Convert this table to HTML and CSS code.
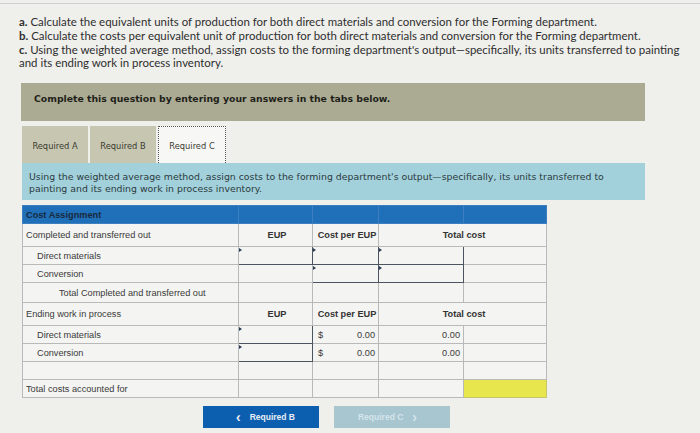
FILE: index.html
```html
<!DOCTYPE html>
<html>
<head>
<meta charset="utf-8">
<link rel="stylesheet" href="styles.css">
</head>
<body>
<div class="page">
  <div class="topline"></div>
  <div class="prompt">
    <div><b>a.</b> Calculate the equivalent units of production for both direct materials and conversion for the Forming department.</div>
    <div><b>b.</b> Calculate the costs per equivalent unit of production for both direct materials and conversion for the Forming department.</div>
    <div><b>c.</b> Using the weighted average method, assign costs to the forming department's output—specifically, its units transferred to painting<br>and its ending work in process inventory.</div>
  </div>
  <div class="banner">Complete this question by entering your answers in the tabs below.</div>
  <div class="tabs">
    <div class="tab">Required A</div>
    <div class="tab">Required B</div>
    <div class="tab active">Required C</div>
  </div>
  <div class="instr">Using the weighted average method, assign costs to the forming department's output—specifically, its units transferred to painting and its ending work in process inventory.</div>
  <table class="grid">
    <colgroup>
      <col class="c1"><col class="c2"><col class="c3"><col class="c4"><col class="c5">
    </colgroup>
    <tr class="head">
      <td>Cost Assignment</td><td></td><td></td><td></td><td></td>
    </tr>
    <tr class="sub">
      <td>Completed and transferred out</td><td class="ctr b">EUP</td><td class="ctr b">Cost per EUP</td><td class="ctr b" colspan="2">Total cost</td>
    </tr>
    <tr class="row">
      <td class="ind1">Direct materials</td><td class="inp"><span class="mark"></span></td><td class="inp"><span class="mark"></span></td><td class="inp"><span class="mark"></span></td><td></td>
    </tr>
    <tr class="row">
      <td class="ind1">Conversion</td><td></td><td class="inp"><span class="mark"></span></td><td class="inp"><span class="mark"></span></td><td></td>
    </tr>
    <tr class="row tall">
      <td class="ind2">Total Completed and transferred out</td><td></td><td></td><td></td><td></td>
    </tr>
    <tr class="sub">
      <td>Ending work in process</td><td class="ctr b">EUP</td><td class="ctr b">Cost per EUP</td><td class="ctr b" colspan="2">Total cost</td>
    </tr>
    <tr class="row">
      <td class="ind1">Direct materials</td><td class="inp"><span class="mark"></span></td><td><div class="money"><span>$</span><span>0.00</span></div></td><td class="num">0.00</td><td></td>
    </tr>
    <tr class="row">
      <td class="ind1">Conversion</td><td class="inp"><span class="mark"></span></td><td><div class="money"><span>$</span><span>0.00</span></div></td><td class="num">0.00</td><td></td>
    </tr>
    <tr class="row">
      <td></td><td></td><td></td><td></td><td></td>
    </tr>
    <tr class="row">
      <td>Total costs accounted for</td><td></td><td></td><td></td><td class="yellow"></td>
    </tr>
  </table>
  <div class="nav">
    <div class="btn prev"><span class="chev">&lsaquo;</span>Required B</div>
    <div class="btn next">Required C<span class="chev">&rsaquo;</span></div>
  </div>
</div>
</body>
</html>
```
FILE: styles.css
```css
html, body { margin: 0; padding: 0; }
body {
  background: #efefec;
  width: 700px;
  height: 433px;
  overflow: hidden;
  font-family: "Liberation Sans", Arial, sans-serif;
  color: #333;
}
.page { position: relative; }
.topline { height: 3px; border-bottom: 1px solid #cfcfcf; }
.prompt {
  padding: 11px 0 0 19px;
  width: 681px;
  font-family: "Lato", "Liberation Sans", sans-serif;
  font-size: 11.45px;
  line-height: 13.8px;
  color: #2e2e2e;
  white-space: nowrap;
}
.prompt b { font-weight: 700; }
.banner {
  margin: 13px 0 0 21px;
  width: 624px;
  height: 38px;
  box-sizing: border-box;
  padding: 10px 0 0 13px;
  background: #abab93;
  font-family: "DejaVu Sans", Verdana, sans-serif;
  font-weight: bold;
  font-size: 9.3px;
  color: #1f1f1a;
}
.tabs {
  display: flex;
  gap: 2px;
  margin: 5px 0 0 22px;
  height: 37px;
}
.tab {
  width: 66px;
  background: #c7c7b1;
  font-family: "DejaVu Sans", Verdana, sans-serif;
  font-size: 8.3px;
  color: #3a3a30;
  display: flex;
  align-items: center;
  justify-content: center;
  padding-top: 2px;
  box-sizing: border-box;
}
.tab.active {
  width: 68px;
  background: #f7f7f5;
  border: 1px dotted #555;
  border-bottom: none;
}
.instr {
  margin-left: 22px;
  width: 623px;
  height: 37px;
  box-sizing: border-box;
  padding: 8px 20px 0 7px;
  background: #a3d1db;
  font-family: "DejaVu Sans", Verdana, sans-serif;
  font-size: 9.35px;
  line-height: 12px;
  color: #2a3a3e;
}
.grid {
  margin: 5px 0 0 22px;
  border-collapse: collapse;
  table-layout: fixed;
  width: 524px;
  font-size: 9.2px;
  color: #3a3a3a;
}
.grid td {
  border: 1px solid #b9b9b9;
  padding: 0 0 0 3px;
  background: #f4f4f2;
  position: relative;
  white-space: nowrap;
  overflow: hidden;
}
.c1 { width: 216px; }
.c2 { width: 74px; }
.c3 { width: 66px; }
.c4 { width: 85px; }
.c5 { width: 83px; }
.grid .head td {
  background: #1f6fb9;
  height: 17px;
  border-color: #3d7fbf;
  font-weight: bold;
  color: #1a2a3e;
}
.grid .sub td { height: 22px; }
.grid .row td { height: 17px; }
.grid .row.tall td { height: 19px; }
.ctr { text-align: center; }
.b { font-weight: bold; color: #333; }
.ind1 { padding-left: 14px !important; }
.ind2 { padding-left: 36px !important; }
.grid td.inp { border: 1px solid #4a5560; }
.mark {
  position: absolute;
  left: 0;
  top: 1px;
  width: 0;
  height: 0;
  border-top: 2px solid transparent;
  border-bottom: 2px solid transparent;
  border-left: 3px solid #2b3d55;
}
.money {
  display: flex;
  justify-content: space-between;
  padding: 0 3px 0 2px;
}
.num { text-align: right; padding-right: 3px !important; }
.grid td.yellow { background: #e7e64c; border-color: #c6c66a; }
.nav {
  display: flex;
  gap: 15px;
  margin: 8px 0 0 203px;
}
.btn {
  width: 116px;
  height: 22px;
  display: flex;
  align-items: center;
  justify-content: center;
  font-family: "Liberation Sans", Arial, sans-serif;
  font-weight: bold;
  font-size: 8.5px;
}
.btn.prev { background: #0c5fae; color: #e8eef6; }
.btn.next { background: #a8c6d0; color: #d4e4ea; }
.chev { font-size: 14px; margin: 0 9px; line-height: 1; }
```
